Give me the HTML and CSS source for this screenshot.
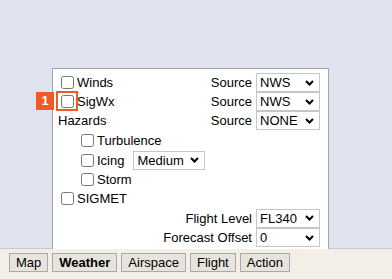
FILE: index.html
```html
<!doctype html>
<html lang="en">
	<head>
		<meta charset="utf-8" />
		<meta name="viewport" content="width=device-width, initial-scale=1" />
		<title>Weather layers</title>
		<link rel="stylesheet" href="styles.css">
	</head>
	<body>
		<div class="map">
			<div class="wx-panel">
				<div class="wx-row">
					<label class="wx-check"><input type="checkbox" />Winds</label>
					<span class="wx-field">Source
						<select class="wx-select"><option>NWS</option></select>
					</span>
				</div>
				<div class="wx-row">
					<label class="wx-check"><input type="checkbox" />SigWx</label>
					<span class="wx-field">Source
						<select class="wx-select"><option>NWS</option></select>
					</span>
				</div>
				<div class="wx-row">
					<span class="wx-heading">Hazards</span>
					<span class="wx-field">Source
						<select class="wx-select"><option>NONE</option></select>
					</span>
				</div>
				<div class="wx-row wx-sub wx-tall">
					<label class="wx-check"><input type="checkbox" />Turbulence</label>
				</div>
				<div class="wx-row wx-sub wx-tall">
					<label class="wx-check"><input type="checkbox" />Icing</label>
					<select class="wx-select wx-level"><option>Medium</option></select>
				</div>
				<div class="wx-row wx-sub">
					<label class="wx-check"><input type="checkbox" />Storm</label>
				</div>
				<div class="wx-row">
					<label class="wx-check"><input type="checkbox" />SIGMET</label>
				</div>
				<div class="wx-row wx-end wx-tall">
					<span class="wx-field">Flight Level
						<select class="wx-select"><option>FL340</option></select>
					</span>
				</div>
				<div class="wx-row wx-end">
					<span class="wx-field">Forecast Offset
						<select class="wx-select"><option>0</option></select>
					</span>
				</div>
			</div>
		</div>
		<nav class="tabs">
			<button class="tab">Map</button>
			<button class="tab tab-active">Weather</button>
			<button class="tab">Airspace</button>
			<button class="tab">Flight</button>
			<button class="tab">Action</button>
		</nav>

		<!-- annotation overlay -->
		<span class="mark-box"></span>
		<span class="mark-badge">1</span>
	</body>
</html>
```

FILE: styles.css
```css
body {
	margin: 0;
	font-family: "Liberation Sans", Arial, sans-serif;
	font-size: 13px;
	color: #000;
	background-color: #f3efe6;
}

.map {
	height: 249px;
	background-color: #dfe3f0;
	border-bottom: 1px solid #c9c9cc;
	box-sizing: border-box;
	display: flex;
	align-items: flex-end;
	padding-left: 52px;
}

/* Weather panel */
.wx-panel {
	background-color: #fff;
	border: 1px solid #a3a3a3;
	border-bottom: none;
	width: 263px;
	padding: 4px 8px 2px 4px;
	margin-bottom: -1px;
}

.wx-row {
	display: flex;
	align-items: center;
	justify-content: space-between;
	height: 19px;
}

.wx-tall {
	height: 20px;
}

.wx-sub {
	justify-content: flex-start;
	padding-left: 20px;
}

.wx-end {
	justify-content: flex-end;
}

.wx-check {
	display: flex;
	align-items: center;
}

.wx-check input {
	width: 13px;
	height: 13px;
	margin: 0 3px 0 4px;
}

.wx-heading {
	padding-left: 1px;
}

.wx-field {
	display: flex;
	align-items: center;
	gap: 4px;
}

.wx-select {
	appearance: none;
	-webkit-appearance: none;
	font-family: "Liberation Sans", Arial, sans-serif;
	font-size: 13px;
	color: #000;
	width: 64px;
	height: 19px;
	padding: 0 0 0 3px;
	border: 1px solid #c6c6c6;
	border-radius: 0;
	background-color: #fff;
	background-image: url("data:image/svg+xml,%3Csvg xmlns='http://www.w3.org/2000/svg' width='9' height='6'%3E%3Cpath d='M1 1l3.5 3.5L8 1' fill='none' stroke='%23000' stroke-width='2'/%3E%3C/svg%3E");
	background-repeat: no-repeat;
	background-position: right 5px center;
}

.wx-level {
	width: 72px;
	margin-left: 9px;
}

/* Bottom tab bar */
.tabs {
	display: flex;
	gap: 4px;
	padding: 4px 9px 0;
}

.tab {
	font-family: "Liberation Sans", Arial, sans-serif;
	font-size: 13px;
	color: #000;
	height: 19px;
	padding: 0 6px;
	background-color: #e7e4dd;
	border: 1px solid #a9a9a9;
	border-radius: 0;
}

.tab-active {
	font-weight: bold;
}

/* Annotation */
.mark-box {
	position: absolute;
	left: 56px;
	top: 91px;
	width: 18px;
	height: 16px;
	border: 2px solid #f05a24;
}

.mark-badge {
	position: absolute;
	left: 36px;
	top: 92px;
	width: 18px;
	height: 18px;
	background-color: #f05a24;
	color: #fff;
	font-weight: bold;
	font-size: 13px;
	line-height: 18px;
	text-align: center;
}
```
